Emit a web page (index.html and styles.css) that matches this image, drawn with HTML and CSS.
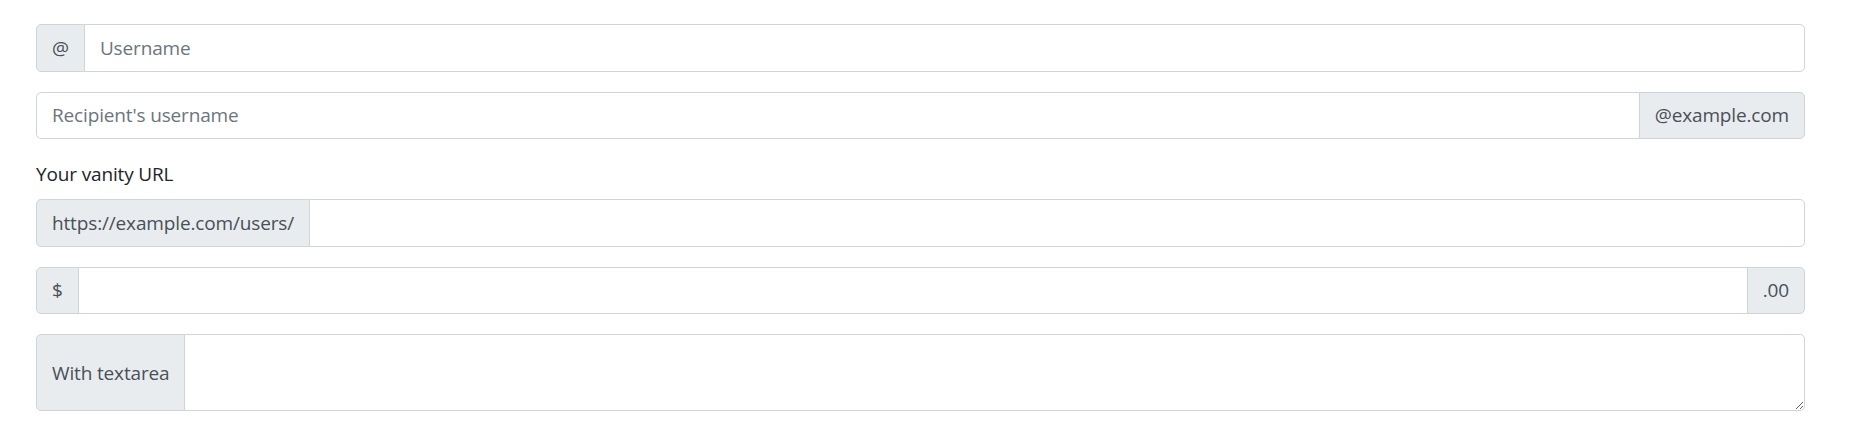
FILE: index.html
```html
<!DOCTYPE html>
<html>
<head>
<meta charset="utf-8">
<link rel="stylesheet" href="styles.css">
</head>
<body>
<div class="page">
  <div class="input-group">
    <span class="addon">@</span>
    <input class="control" type="text" placeholder="Username">
  </div>
  <div class="input-group">
    <input class="control" type="text" placeholder="Recipient's username">
    <span class="addon">@example.com</span>
  </div>
  <label class="label">Your vanity URL</label>
  <div class="input-group">
    <span class="addon">https://example.com/users/</span>
    <input class="control" type="text">
  </div>
  <div class="input-group">
    <span class="addon">$</span>
    <input class="control" type="text">
    <span class="addon">.00</span>
  </div>
  <div class="input-group">
    <span class="addon">With textarea</span>
    <textarea class="control area" rows="2"></textarea>
  </div>
</div>
</body>
</html>
```
FILE: styles.css
```css
html, body {
  margin: 0;
  padding: 0;
  background: #fff;
}
body {
  font-family: "Open Sans", "Noto Sans", sans-serif;
  font-size: 19px;
  letter-spacing: -0.15px;
  line-height: 30px;
  color: #212529;
}
.page {
  padding: 24px 50px 0 36px;
  display: flex;
  flex-direction: column;
}
.input-group {
  display: flex;
  align-items: stretch;
  margin-bottom: 20px;
}
.addon {
  display: flex;
  align-items: center;
  padding: 0 15px;
  background: #e9ecef;
  border: 1px solid #ced4da;
  color: #495057;
  white-space: nowrap;
}
.control {
  flex: 1 1 auto;
  min-width: 0;
  height: 47.5px;
  box-sizing: border-box;
  padding: 7.5px 15px;
  border: 1px solid #ced4da;
  font-family: inherit;
  font-size: 19px;
  letter-spacing: -0.15px;
  line-height: 30px;
  color: #495057;
  background: #fff;
  margin: 0;
  outline: none;
}
.control::placeholder {
  color: #6c757d;
  opacity: 1;
}
.area {
  height: 77px;
  resize: vertical;
}
.input-group > * {
  border-radius: 0;
}
.input-group > * + * {
  margin-left: -1px;
}
.input-group > :first-child {
  border-top-left-radius: 5px;
  border-bottom-left-radius: 5px;
}
.input-group > :last-child {
  border-top-right-radius: 5px;
  border-bottom-right-radius: 5px;
}
.label {
  display: block;
  margin-bottom: 10px;
}
```
